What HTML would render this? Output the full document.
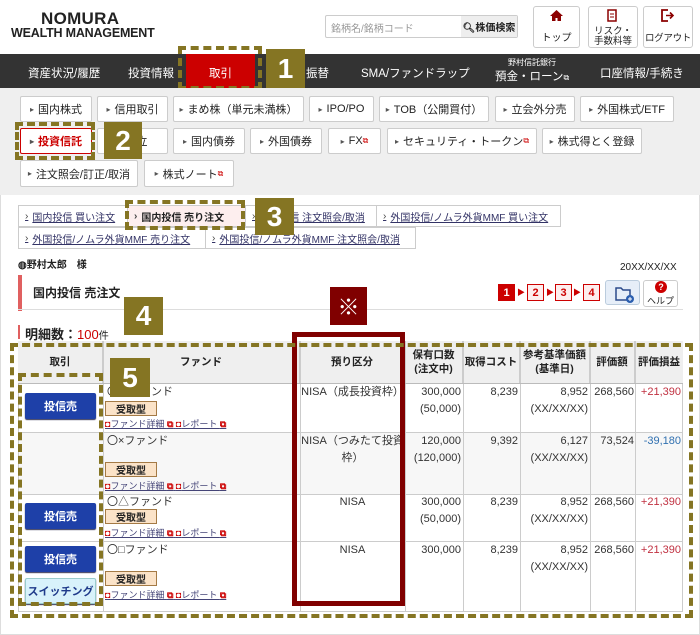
<!DOCTYPE html>
<html><head><meta charset="utf-8">
<style>
*{margin:0;padding:0;box-sizing:border-box}
body{width:700px;height:635px;overflow:hidden;background:#fff;font-family:"Liberation Sans","Noto Sans CJK JP",sans-serif;color:#222;position:relative;font-size:11px}
.a{position:absolute}
.nav{color:#fff;font-size:11.5px;top:65px}
.sb{position:absolute;background:#fff;border:1px solid #ccc;border-radius:2px;font-size:11px;display:flex;align-items:center;justify-content:center;color:#222}
.sb:before{content:"▸";font-size:8px;color:#555;margin-right:4px}
.dash{position:absolute;border:4px dashed #857523}
.lbl{position:absolute;background:#857523;color:#fff;font-size:28px;font-weight:bold;display:flex;align-items:center;justify-content:center}
.tab{position:absolute;border:1px solid #ccc;font-size:10px;color:#336;text-decoration:underline;display:flex;align-items:center;padding-left:6px;height:22px}
.tab:before{content:"›";margin-right:4px;text-decoration:none;display:inline-block;color:#444}
.hb{position:absolute;top:341px;height:42px;background:#efefef;border-right:1px solid #ccc;font-weight:bold;font-size:10.5px;display:flex;align-items:center;justify-content:center;text-align:center;line-height:1.35}
.c{position:absolute;font-size:11px;color:#333;line-height:1.55}
.btn{position:absolute;left:25px;width:71px;height:26px;background:#1e40a8;color:#fff;font-weight:bold;font-size:11px;border-radius:2px;display:flex;align-items:center;justify-content:center;box-shadow:0 1px 1px #335}
.tag{position:absolute;left:105px;width:52px;height:15px;background:#fbe3c8;border:1px solid #a47a45;font-size:10px;font-weight:bold;display:flex;align-items:center;justify-content:center}
.lk{position:absolute;left:105px;font-size:9px;color:#447;text-decoration:underline}
.lk b{color:#c00;text-decoration:none}
.st{position:absolute;top:284px;width:17px;height:17px;border:1px solid #c00;color:#c00;font-weight:bold;font-size:11px;display:flex;align-items:center;justify-content:center;background:#fdeeee}
.ar{position:absolute;top:287px;color:#c00;font-size:8px}
.vl{position:absolute;top:341px;width:1px;height:271px;background:#ccc}
.hl{position:absolute;left:18px;width:665px;height:1px;background:#ccc}
</style></head><body>
<div class="a" style="left:41px;top:9px;font-size:17px;font-weight:bold;letter-spacing:0.3px">NOMURA</div>
<div class="a" style="left:11px;top:26px;font-size:12.5px;font-weight:bold;letter-spacing:-0.2px">WEALTH MANAGEMENT</div>
<div class="a" style="left:325px;top:15px;width:193px;height:23px;border:1px solid #ccc;border-radius:2px;background:#fff"></div>
<div class="a" style="left:331px;top:20px;font-size:10px;color:#999">銘柄名/銘柄コード</div>
<div class="a" style="left:461px;top:16px;width:56px;height:21px;background:#eee;font-size:10px;font-weight:bold;display:flex;align-items:center;justify-content:center">🔍︎株価検索</div>
<div class="a" style="left:533px;top:6px;width:47px;height:42px;border:1px solid #ccc;border-radius:3px;text-align:center;font-size:10px;padding-top:22px">トップ</div>
<div class="a" style="left:550px;top:10px;width:13px;height:11px;"><svg width="13" height="11"><path d="M6.5 0L0 6h2v5h3.5V8h2v3H11V6h2z" fill="#8b0000"/></svg></div>
<div class="a" style="left:588px;top:6px;width:50px;height:42px;border:1px solid #ccc;border-radius:3px;text-align:center;font-size:9.5px;line-height:1.1;padding-top:20px">リスク・<br>手数料等</div>
<div class="a" style="left:607px;top:9px;"><svg width="11" height="13"><rect x="1" y="1" width="8" height="11" fill="none" stroke="#8b0000" stroke-width="1.5"/><path d="M3 5h4M3 8h4" stroke="#8b0000"/></svg></div>
<div class="a" style="left:643px;top:6px;width:50px;height:42px;border:1px solid #ccc;border-radius:3px;text-align:center;font-size:9.5px;padding-top:23px;white-space:nowrap;letter-spacing:-0.3px">ログアウト</div>
<div class="a" style="left:661px;top:9px;"><svg width="14" height="13"><path d="M7 1H1v11h6" fill="none" stroke="#8b0000" stroke-width="1.8"/><path d="M5 6.5h6M9 3.5l3 3-3 3" fill="none" stroke="#8b0000" stroke-width="1.6"/></svg></div>
<div class="a" style="left:0;top:54px;width:700px;height:34px;background:#333"></div>
<div class="a" style="left:186px;top:54px;width:69px;height:34px;background:#c00"></div>
<div class="a nav" style="left:28px">資産状況/履歴</div>
<div class="a nav" style="left:128px">投資情報</div>
<div class="a nav" style="left:209px">取引</div>
<div class="a nav" style="left:306px">振替</div>
<div class="a nav" style="left:361px">SMA/ファンドラップ</div>
<div class="a" style="left:508px;top:57px;color:#fff;font-size:8px">野村信託銀行</div>
<div class="a nav" style="left:495px;top:68px">預金・ローン<span style="font-size:8px">⧉</span></div>
<div class="a nav" style="left:600px">口座情報/手続き</div>
<div class="dash" style="left:178px;top:46px;width:84px;height:44px"></div>
<div class="lbl" style="left:266px;top:49px;width:39px;height:39px">1</div>
<div class="a" style="left:0;top:88px;width:700px;height:107px;background:#efefef"></div>
<div class="sb" style="left:20px;top:96px;width:72px;height:26px">国内株式</div>
<div class="sb" style="left:97px;top:96px;width:71px;height:26px">信用取引</div>
<div class="sb" style="left:173px;top:96px;width:131px;height:26px">まめ株（単元未満株）</div>
<div class="sb" style="left:309px;top:96px;width:65px;height:26px">IPO/PO</div>
<div class="sb" style="left:379px;top:96px;width:110px;height:26px">TOB（公開買付）</div>
<div class="sb" style="left:495px;top:96px;width:80px;height:26px">立会外分売</div>
<div class="sb" style="left:580px;top:96px;width:94px;height:26px">外国株式/ETF</div>
<div class="sb" style="left:20px;top:128px;width:72px;height:26px;border:1px solid #c00;color:#c00;font-weight:bold">投資信託</div>
<div class="sb" style="left:97px;top:128px;width:71px;height:26px">積立</div>
<div class="sb" style="left:173px;top:128px;width:72px;height:26px">国内債券</div>
<div class="sb" style="left:250px;top:128px;width:72px;height:26px">外国債券</div>
<div class="sb" style="left:328px;top:128px;width:53px;height:26px">FX<span style="color:#c00;font-size:8px">⧉</span></div>
<div class="sb" style="left:387px;top:128px;width:150px;height:26px">セキュリティ・トークン<span style="color:#c00;font-size:8px">⧉</span></div>
<div class="sb" style="left:542px;top:128px;width:100px;height:26px">株式得とく登録</div>
<div class="sb" style="left:20px;top:160px;width:118px;height:27px">注文照会/訂正/取消</div>
<div class="sb" style="left:144px;top:160px;width:90px;height:27px">株式ノート<span style="color:#c00;font-size:8px">⧉</span></div>
<div class="dash" style="left:15px;top:122px;width:80px;height:38px"></div>
<div class="lbl" style="left:104px;top:122px;width:38px;height:37px">2</div>
<div class="a" style="left:0;top:195px;width:700px;height:440px;border:1px solid #ddd;border-top:none"></div>
<div class="tab" style="left:18px;top:205px;width:110px">国内投信 買い注文</div>
<div class="tab" style="left:127px;top:205px;width:119px;background:#fdeeee;color:#222;font-weight:bold;text-decoration:none">国内投信 売り注文</div>
<div class="tab" style="left:245px;top:205px;width:132px">国内投信 注文照会/取消</div>
<div class="tab" style="left:376px;top:205px;width:185px">外国投信/ノムラ外貨MMF 買い注文</div>
<div class="tab" style="left:18px;top:227px;width:188px">外国投信/ノムラ外貨MMF 売り注文</div>
<div class="tab" style="left:205px;top:227px;width:211px">外国投信/ノムラ外貨MMF 注文照会/取消</div>
<div class="dash" style="left:125px;top:200px;width:120px;height:30px"></div>
<div class="lbl" style="left:255px;top:198px;width:39px;height:37px">3</div>
<div class="a" style="left:18px;top:256px;font-size:10px;font-weight:bold">◍野村太郎　様</div>
<div class="a" style="left:620px;top:262px;font-size:10px">20XX/XX/XX</div>
<div class="a" style="left:18px;top:275px;width:4px;height:36px;background:#e06060"></div>
<div class="a" style="left:33px;top:284px;font-size:12px;font-weight:bold">国内投信 売注文</div>
<div class="a" style="left:18px;top:309px;width:665px;height:1px;background:#ddd"></div>
<div class="st" style="left:498px;background:#c00;color:#fff">1</div>
<div class="ar" style="left:517px">▶</div>
<div class="st" style="left:527px">2</div>
<div class="ar" style="left:546px">▶</div>
<div class="st" style="left:555px">3</div>
<div class="ar" style="left:573px">▶</div>
<div class="st" style="left:583px">4</div>
<div class="a" style="left:605px;top:280px;width:35px;height:25px;background:#e6eef8;border:1px solid #bcd;border-radius:3px"><svg width="35" height="25"><path d="M10 7h5l2 2h7v10H10z" fill="none" stroke="#2b4a8a" stroke-width="1.5"/><circle cx="24" cy="18" r="4" fill="#2b5fb0"/><path d="M22 18h4M24 16v4" stroke="#fff"/></svg></div>
<div class="a" style="left:643px;top:280px;width:35px;height:27px;border:1px solid #ccc;border-radius:3px;text-align:center;font-size:9px;padding-top:13px">ヘルプ</div>
<div class="a" style="left:655px;top:281px;width:12px;height:12px;border-radius:6px;background:#c00;color:#fff;font-size:9px;font-weight:bold;text-align:center;line-height:12px">?</div>
<div class="lbl" style="left:124px;top:297px;width:39px;height:38px">4</div>
<div class="a" style="left:330px;top:287px;width:37px;height:38px;background:#800000;color:#fff;font-size:22px;display:flex;align-items:center;justify-content:center">※</div>
<div class="a" style="left:18px;top:325px;width:2px;height:14px;background:#e06060"></div>
<div class="a" style="left:25px;top:324px;font-size:13px;font-weight:bold">明細数：<span style="color:#c00;font-weight:normal">100</span><span style="font-size:10px;font-weight:normal">件</span></div>
<div class="a" style="left:18px;top:341px;width:665px;height:271px;border:1px solid #ccc"></div>
<div class="a" style="left:19px;top:432px;width:663px;height:62px;background:#f7f7f7"></div>
<div class="hb" style="left:18px;width:85px">取引</div>
<div class="hb" style="left:103px;width:197px">ファンド</div>
<div class="hb" style="left:300px;width:105px">預り区分</div>
<div class="hb" style="left:405px;width:58px">保有口数<br>(注文中)</div>
<div class="hb" style="left:463px;width:57px">取得コスト</div>
<div class="hb" style="left:520px;width:70px">参考基準価額<br>(基準日)</div>
<div class="hb" style="left:590px;width:45px">評価額</div>
<div class="hb" style="left:635px;width:48px;border-right:none">評価損益</div>
<div class="vl" style="left:103px"></div><div class="vl" style="left:300px"></div><div class="vl" style="left:405px"></div><div class="vl" style="left:463px"></div><div class="vl" style="left:520px"></div><div class="vl" style="left:590px"></div><div class="vl" style="left:635px"></div>
<div class="hl" style="top:383px;background:#bbb"></div><div class="hl" style="top:432px"></div><div class="hl" style="top:494px"></div><div class="hl" style="top:541px"></div>
<div class="btn" style="top:393px">投信売</div>
<div class="c" style="left:107px;top:384px">〇〇ファンド</div>
<div class="tag" style="top:401px">受取型</div>
<div class="lk" style="top:417px"><b>◘</b>ファンド詳細 <b>⧉</b> <b>◘</b>レポート <b>⧉</b></div>
<div class="c" style="left:300px;top:384px;width:105px;text-align:center">NISA（成長投資枠）</div>
<div class="c" style="left:405px;top:384px;width:56px;text-align:right">300,000<br>(50,000)</div>
<div class="c" style="left:463px;top:384px;width:55px;text-align:right">8,239</div>
<div class="c" style="left:520px;top:384px;width:68px;text-align:right">8,952<br>(XX/XX/XX)</div>
<div class="c" style="left:590px;top:384px;width:44px;text-align:right">268,560</div>
<div class="c" style="left:635px;top:384px;width:46px;text-align:right;color:#c03040">+21,390</div>
<div class="c" style="left:107px;top:433px">〇×ファンド</div>
<div class="tag" style="top:462px">受取型</div>
<div class="lk" style="top:479px"><b>◘</b>ファンド詳細 <b>⧉</b> <b>◘</b>レポート <b>⧉</b></div>
<div class="c" style="left:300px;top:433px;width:105px;text-align:center">NISA（つみたて投資<br>枠）</div>
<div class="c" style="left:405px;top:433px;width:56px;text-align:right">120,000<br>(120,000)</div>
<div class="c" style="left:463px;top:433px;width:55px;text-align:right">9,392</div>
<div class="c" style="left:520px;top:433px;width:68px;text-align:right">6,127<br>(XX/XX/XX)</div>
<div class="c" style="left:590px;top:433px;width:44px;text-align:right">73,524</div>
<div class="c" style="left:635px;top:433px;width:46px;text-align:right;color:#3070b0">-39,180</div>
<div class="btn" style="top:503px">投信売</div>
<div class="c" style="left:107px;top:494px">〇△ファンド</div>
<div class="tag" style="top:509px">受取型</div>
<div class="lk" style="top:526px"><b>◘</b>ファンド詳細 <b>⧉</b> <b>◘</b>レポート <b>⧉</b></div>
<div class="c" style="left:300px;top:494px;width:105px;text-align:center">NISA</div>
<div class="c" style="left:405px;top:494px;width:56px;text-align:right">300,000<br>(50,000)</div>
<div class="c" style="left:463px;top:494px;width:55px;text-align:right">8,239</div>
<div class="c" style="left:520px;top:494px;width:68px;text-align:right">8,952<br>(XX/XX/XX)</div>
<div class="c" style="left:590px;top:494px;width:44px;text-align:right">268,560</div>
<div class="c" style="left:635px;top:494px;width:46px;text-align:right;color:#c03040">+21,390</div>
<div class="btn" style="top:546px">投信売</div>
<div class="btn" style="top:578px;background:#d8f2fb;color:#1e3a8a;border:1px solid #9cc">スイッチング</div>
<div class="c" style="left:107px;top:542px">〇□ファンド</div>
<div class="tag" style="top:571px">受取型</div>
<div class="lk" style="top:588px"><b>◘</b>ファンド詳細 <b>⧉</b> <b>◘</b>レポート <b>⧉</b></div>
<div class="c" style="left:300px;top:542px;width:105px;text-align:center">NISA</div>
<div class="c" style="left:405px;top:542px;width:56px;text-align:right">300,000</div>
<div class="c" style="left:463px;top:542px;width:55px;text-align:right">8,239</div>
<div class="c" style="left:520px;top:542px;width:68px;text-align:right">8,952<br>(XX/XX/XX)</div>
<div class="c" style="left:590px;top:542px;width:44px;text-align:right">268,560</div>
<div class="c" style="left:635px;top:542px;width:46px;text-align:right;color:#c03040">+21,390</div>
<div class="a" style="left:292px;top:332px;width:113px;height:274px;border:5px solid #800000"></div>
<div class="dash" style="left:10px;top:343px;width:683px;height:275px"></div>
<div class="dash" style="left:18px;top:373px;width:85px;height:233px"></div>
<div class="lbl" style="left:110px;top:358px;width:40px;height:39px">5</div>
</body></html>
